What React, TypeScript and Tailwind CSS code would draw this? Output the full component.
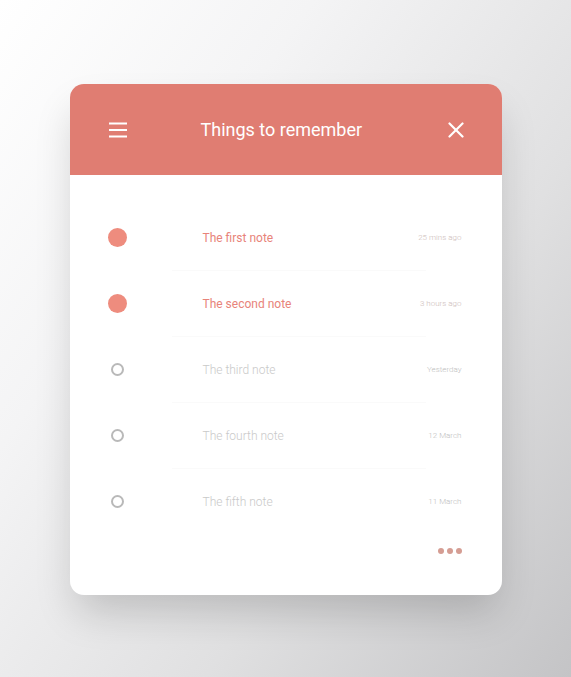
import React from 'react';

const notes = [
  { title: 'The first note', date: '25 mins ago', done: true },
  { title: 'The second note', date: '3 hours ago', done: true },
  { title: 'The third note', date: 'Yesterday', done: false },
  { title: 'The fourth note', date: '12 March', done: false },
  { title: 'The fifth note', date: '11 March', done: false },
];

const App = () => {
  return (
    <div className="h-[677px] w-full overflow-hidden bg-[linear-gradient(125deg,#ffffff_0%,#f4f4f5_30%,#e0e0e1_65%,#c4c4c6_100%)] pt-[84px] font-['Roboto',sans-serif]">
      <div className="mx-auto w-[432px] overflow-hidden rounded-[14px] bg-white shadow-[0_22px_40px_-6px_rgba(0,0,0,0.18)]">
        <div className="flex h-[91px] items-center bg-[#e07d72] pl-[39px] pr-[38px]">
          <svg width="18" height="16" viewBox="0 0 18 16" fill="none" stroke="white" strokeWidth="1.8">
            <line x1="0" y1="1.5" x2="18" y2="1.5" />
            <line x1="0" y1="8" x2="18" y2="8" />
            <line x1="0" y1="14.5" x2="18" y2="14.5" />
          </svg>
          <h1 className="ml-[74px] flex-1 text-[18px] font-normal leading-none text-white">Things to remember</h1>
          <svg width="16" height="16" viewBox="0 0 16 16" fill="none" stroke="white" strokeWidth="2.2" strokeLinecap="round">
            <line x1="1.5" y1="1.5" x2="14.5" y2="14.5" />
            <line x1="14.5" y1="1.5" x2="1.5" y2="14.5" />
          </svg>
        </div>

        <div className="pt-[30px]">
          {notes.map((note, i) => (
            <div key={note.title}>
              <div className="flex h-[65px] items-center pl-[38px] pr-[40px]">
                <div className="flex w-[19px] justify-center">
                  {note.done ? (
                    <span className="block h-[19px] w-[19px] rounded-full bg-[#ee8c7e]" />
                  ) : (
                    <span className="block h-[13px] w-[13px] rounded-full border-2 border-[#b9b9b9]" />
                  )}
                </div>
                <span
                  className={
                    note.done
                      ? 'ml-[76px] flex-1 text-[12px] text-[#e8837a]'
                      : 'ml-[76px] flex-1 text-[12px] font-light text-[#c9c9c9]'
                  }
                >
                  {note.title}
                </span>
                <span
                  className={
                    note.done ? 'text-[8px] font-light text-[#cdbcb9]' : 'text-[8px] font-light text-[#bdbdbd]'
                  }
                >
                  {note.date}
                </span>
              </div>
              {i < notes.length - 1 && <div className="ml-[102px] mr-[76px] h-px bg-[#fafafa]" />}
            </div>
          ))}
        </div>

        <div className="flex h-[61px] items-center justify-end gap-[3px] pb-[28px] pr-[40px]">
          <span className="block h-[6px] w-[6px] rounded-full bg-[#d59d93]" />
          <span className="block h-[6px] w-[6px] rounded-full bg-[#d59d93]" />
          <span className="block h-[6px] w-[6px] rounded-full bg-[#d59d93]" />
        </div>
      </div>
    </div>
  );
};

export default App;
